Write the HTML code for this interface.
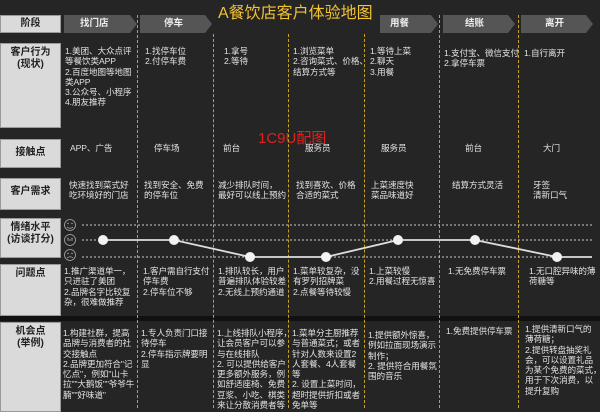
<!DOCTYPE html>
<html><head><meta charset="utf-8"><style>
*{margin:0;padding:0;box-sizing:border-box}
body{width:600px;height:408px;background:#252525;position:relative;overflow:hidden;font-family:"Liberation Sans","Noto Sans CJK SC",sans-serif;color:#e2e2e2}
.lb{position:absolute;left:0;width:61px;background:#dadada;color:#222;font-weight:bold;font-size:10px;text-align:center;line-height:12px;padding-top:3px;border:1px solid #999}
.t{position:absolute;font-size:8.6px;line-height:10.3px;white-space:nowrap;letter-spacing:-0.1px}
.ar{position:absolute;top:15px;height:18px;background:#555;color:#eee;font-size:9.5px;font-weight:bold;line-height:18px;padding-left:16px;clip-path:polygon(0 0,calc(100% - 7px) 0,100% 50%,calc(100% - 7px) 100%,0 100%)}
.dl{position:absolute;top:15px;bottom:0;width:0;border-left:1.5px dashed #c9a020}
</style></head><body>
<div style="position:absolute;left:218px;top:-1px;font-size:16px;color:#f2c230">A餐饮店客户体验地图</div>
<div style="position:absolute;left:258px;top:127px;font-size:15px;color:#e32020">1C9U配图</div>

<div class="lb" style="top:15px;height:18px;padding-top:2px">阶段</div>
<div class="lb" style="top:43px;height:85px">客户行为<br>(现状)</div>
<div class="lb" style="top:139px;height:29px;padding-top:7px">接触点</div>
<div class="lb" style="top:178px;height:32px;padding-top:7px">客户需求</div>
<div class="lb" style="top:218px;height:40px">情绪水平<br>(访谈打分)</div>
<div class="lb" style="top:264px;height:52px">问题点</div>
<div style="position:absolute;left:0;top:316px;width:600px;height:5px;background:#111"></div>
<div class="lb" style="top:322px;height:90px">机会点<br>(举例)</div>

<div class="ar" style="left:64px;width:73px">找门店</div>
<div class="ar" style="left:140px;width:72px;padding-left:24px">停车</div>
<div class="ar" style="left:380px;width:58px;padding-left:10px">用餐</div>
<div class="ar" style="left:443px;width:72px;padding-left:22px">结账</div>
<div class="ar" style="left:521px;width:72px;padding-left:24px">离开</div>

<div class="dl" style="left:137px"></div>
<div class="dl" style="left:213px;top:34px"></div>
<div class="dl" style="left:288px;top:34px"></div>
<div class="dl" style="left:364px;top:34px"></div>
<div class="dl" style="left:439px"></div>
<div class="dl" style="left:518px"></div>

<div class="t" style="left:65px;top:46px">1.美团、大众点评<br>等餐饮类APP<br>2.百度地图等地图<br>类APP<br>3.公众号、小程序<br>4.朋友推荐</div>
<div class="t" style="left:145px;top:46px">1.找停车位<br>2.付停车费</div>
<div class="t" style="left:224px;top:46px">1.拿号<br>2.等待</div>
<div class="t" style="left:293px;top:46px">1.浏览菜单<br>2.咨询菜式、价格、<br>结算方式等</div>
<div class="t" style="left:370px;top:46px">1.等待上菜<br>2.聊天<br>3.用餐</div>
<div class="t" style="left:444px;top:48px">1.支付宝、微信支付<br>2.拿停车票</div>
<div class="t" style="left:524px;top:48px">1.自行离开</div>

<div class="t" style="left:70px;top:143px">APP、广告</div>
<div class="t" style="left:154px;top:143px">停车场</div>
<div class="t" style="left:223px;top:143px">前台</div>
<div class="t" style="left:305px;top:143px">服务员</div>
<div class="t" style="left:381px;top:143px">服务员</div>
<div class="t" style="left:465px;top:143px">前台</div>
<div class="t" style="left:543px;top:143px">大门</div>

<div class="t" style="left:69px;top:180px">快速找到菜式好<br>吃环境好的门店</div>
<div class="t" style="left:144px;top:180px">找到安全、免费<br>的停车位</div>
<div class="t" style="left:218px;top:180px">减少排队时间，<br>最好可以线上预约</div>
<div class="t" style="left:296px;top:180px">找到喜欢、价格<br>合适的菜式</div>
<div class="t" style="left:371px;top:180px">上菜速度快<br>菜品味道好</div>
<div class="t" style="left:452px;top:180px">结算方式灵活</div>
<div class="t" style="left:533px;top:180px">牙签<br>清新口气</div>

<svg style="position:absolute;left:0;top:0" width="600" height="408">
<g stroke="#ccc" stroke-width="1" stroke-dasharray="2,2" fill="none">
<line x1="82" y1="225" x2="592" y2="225"/><line x1="82" y1="240" x2="592" y2="240"/><line x1="82" y1="257" x2="592" y2="257"/></g>
<g stroke="#aaa" fill="none" stroke-width="0.8">
<circle cx="70" cy="225" r="5.5"/><circle cx="70" cy="240" r="5.5"/><circle cx="70" cy="255" r="5.5"/>
<path d="M67 227q3 2.5 6 0M67 240h6M67 258q3-2.5 6 0"/></g>
<g fill="#aaa"><circle cx="68" cy="223.5" r=".7"/><circle cx="72" cy="223.5" r=".7"/><circle cx="68" cy="238.5" r=".7"/><circle cx="72" cy="238.5" r=".7"/><circle cx="68" cy="253.5" r=".7"/><circle cx="72" cy="253.5" r=".7"/></g>
<polyline points="103,240 174,240 250,257 326,257 398,240 475,240 557,257 592,257" stroke="#ddd" stroke-width="1.8" fill="none"/>
<g fill="#f2f2f2"><circle cx="103" cy="240" r="5"/><circle cx="174" cy="240" r="5"/><circle cx="250" cy="257" r="5"/><circle cx="326" cy="257" r="5"/><circle cx="398" cy="240" r="5"/><circle cx="475" cy="240" r="5"/><circle cx="557" cy="257" r="5"/></g>
</svg>

<div class="t" style="left:64px;top:266px">1.推广渠道单一，<br>只进驻了美团<br>2.品牌名字比较复<br>杂，很难做推荐</div>
<div class="t" style="left:143px;top:266px">1.客户需自行支付<br>停车费<br>2.停车位不够</div>
<div class="t" style="left:218px;top:266px">1.排队较长，用户<br>普遍排队体验较差<br>2.无线上预约通道</div>
<div class="t" style="left:293px;top:266px">1.菜单较复杂，没<br>有罗列招牌菜<br>2.点餐等待较慢</div>
<div class="t" style="left:369px;top:266px">1.上菜较慢<br>2.用餐过程无惊喜</div>
<div class="t" style="left:448px;top:266px">1.无免费停车票</div>
<div class="t" style="left:529px;top:266px">1.无口腔异味的薄<br>荷糖等</div>

<div class="t" style="left:63px;top:328px">1.构建社群，提高<br>品牌与消费者的社<br>交接触点<br>2.品牌更加符合"记<br>忆点"，例如"山卡<br>拉""大鹅饭""爷爷牛<br>腩""好味道"</div>
<div class="t" style="left:141px;top:328px">1.专人负责门口接<br>待停车<br>2.停车指示牌要明<br>显</div>
<div class="t" style="left:217px;top:328px">1.上线排队小程序，<br>让会员客户可以参<br>与在线排队<br>2. 可以提供给客户<br>更多额外服务，例<br>如舒适座椅、免费<br>豆浆、小吃、棋类<br>来让分散消费者等</div>
<div class="t" style="left:292px;top:328px">1.菜单分主厨推荐<br>与普通菜式；或者<br>针对人数来设置2<br>人套餐、4人套餐<br>等<br>2. 设置上菜时间，<br>超时提供折扣或者<br>免单等</div>
<div class="t" style="left:368px;top:330px">1.提供额外惊喜，<br>例如拉面现场演示<br>制作；<br>2. 提供符合用餐氛<br>围的音乐</div>
<div class="t" style="left:446px;top:326px">1.免费提供停车票</div>
<div class="t" style="left:525px;top:324px">1.提供清新口气的<br>薄荷糖；<br>2.提供转盘抽奖礼<br>会，可以设置礼品<br>为某个免费的菜式，<br>用于下次消费，以<br>提升复购</div>
</body></html>
